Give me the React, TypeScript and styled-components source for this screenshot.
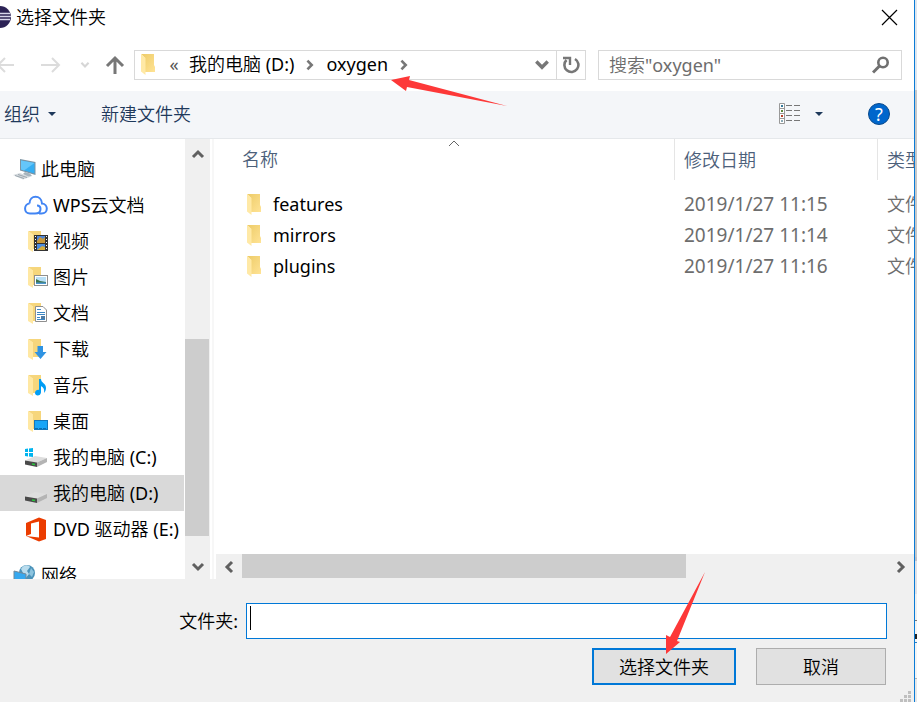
import React from "react";
import styled, { createGlobalStyle, css } from "styled-components";

const FONT = `"Noto Sans", "Noto Sans CJK SC DemiLight", "Noto Sans CJK SC", sans-serif`;

const GlobalStyle = createGlobalStyle`
  *, *::before, *::after { box-sizing: border-box; }
  html, body, #root { height: 100%; }
  body { margin: 0; background: #f0f0f0; overflow: hidden; font-family: ${FONT}; font-size: 18px; font-weight: 400; line-height: 24px; color: #000; }
  button, input { font: inherit; color: inherit; }
`;

const Screen = styled.div`
  position: relative;
  display: flex;
  height: 100vh;
`;

const Dialog = styled.main`
  flex: 1;
  min-width: 0;
  display: flex;
  flex-direction: column;
  background: #fff;
  border-right: 1px solid #0a7bd6;
`;

const Backdrop = styled.div`
  width: 2px;
  background: linear-gradient(
    #dfe6ee 0 90px, #c8c8c8 90px 557px, #bfc0c8 557px 561px, #e2e2e6 561px 594px,
    #f0f0f0 594px 620px, #777 620px 621px, #f4f4f4 621px 634px, #222 634px 639px,
    #f4f4f4 639px 642px, #2a7fc4 642px 643px, #f4f4f4 643px 678px, #b5b5b5 678px 679px, #e8e8e8 679px
  );
`;

const PlainButton = styled.button`
  display: inline-flex;
  align-items: center;
  justify-content: center;
  padding: 0;
  border: 0;
  background: none;
  white-space: nowrap;
  svg { display: block; }
`;

const TitleBar = styled.header`
  display: flex;
  align-items: center;
  height: 34px;
  padding-right: 16px;
`;

const AppMark = styled.span`
  display: flex;
  width: 11px;
  margin-right: 5px;
`;

const Title = styled.h1`
  flex: 1;
  margin: 0;
  font-size: 18px;
  font-weight: inherit;
`;

const Navigation = styled.nav`
  display: flex;
  align-items: center;
  height: 30px;
  margin: 16px 12px 11px 0;
`;

const NavButtons = styled.div`
  display: flex;
  align-items: center;
  width: 134px;
  flex: none;
`;

const NavForward = styled(PlainButton)`
  margin: 0 19px 0 26px;
`;

const NavUp = styled(PlainButton)`
  margin-left: 15px;
`;

const AddressBar = styled.div`
  display: flex;
  align-items: stretch;
  flex: 1;
  min-width: 0;
  height: 30px;
  border: 1px solid #d9d9d9;
`;

const Crumbs = styled.div`
  display: flex;
  align-items: center;
  flex: 1;
  min-width: 0;
  padding: 0 0 2px 5px;
`;

const Overflow = styled(PlainButton)`
  width: 18px;
  margin: 0 6px 0 10px;
  color: #555;
`;

const CrumbArrow = styled(PlainButton)`
  width: 32px;
  padding-top: 2px;
`;

const AddressTool = styled(PlainButton)<{ $divided?: boolean }>`
  width: 29px;
  ${(p) => p.$divided && css`border-left: 1px solid #d9d9d9;`}
`;

const SearchBox = styled.label`
  display: flex;
  align-items: center;
  flex: 0 1 304px;
  min-width: 0;
  height: 30px;
  margin-left: 12px;
  padding: 0 12px 0 10px;
  border: 1px solid #d9d9d9;
`;

const SearchInput = styled.input`
  flex: 1;
  min-width: 0;
  padding: 0;
  border: 0;
  outline: 0;
  background: none;
  &::placeholder { color: #6d6d6d; opacity: 1; }
`;

const Toolbar = styled.div`
  display: flex;
  align-items: center;
  height: 48px;
  padding: 0 24px 2px 4px;
  background: #f4f6f9;
  border-bottom: 1px solid #e5e8eb;
  color: #1e395b;
`;

const OrganizeButton = styled(PlainButton)`
  gap: 8px;
  margin-right: 45px;
`;

const ToolGroup = styled.div`
  display: flex;
  align-items: center;
  margin-left: auto;
`;

const ViewButton = styled(PlainButton)`
  gap: 14px;
  margin-right: 45px;
`;

const HelpButton = styled(PlainButton)`
  width: 22px;
  height: 22px;
  border: 1px solid #0a4a8c;
  border-radius: 50%;
  background: #0066cc;
  color: #fff;
  font-size: 18px;
  line-height: 20px;
`;

const Body = styled.div`
  display: flex;
  flex: 1;
  min-height: 0;
`;

const Sidebar = styled.aside`
  flex: none;
  display: flex;
  width: 216px;
`;

const Tree = styled.ul`
  flex: 1;
  min-width: 0;
  margin: 0;
  padding: 12px 0 0;
  list-style: none;
  overflow: hidden;
`;

const TreeItem = styled.li<{ $level: 0 | 1; $selected?: boolean; $gap?: boolean }>`
  display: flex;
  align-items: center;
  gap: 4px;
  height: 36px;
  margin-top: ${(p) => (p.$gap ? 10 : 0)}px;
  padding-left: ${(p) => (p.$level ? 24 : 12)}px;
  background: ${(p) => (p.$selected ? "#d9d9d9" : "transparent")};
  white-space: nowrap;
  svg { flex: none; }
`;

const VerticalScroll = styled.div`
  display: flex;
  flex-direction: column;
  width: 25px;
  margin-left: 1px;
  background: #f0f0f0;
`;

const VerticalTrack = styled.div`
  flex: 1;
  display: grid;
  grid-template-rows: 170fr 197fr 18fr;
`;

const Thumb = styled.div`
  grid-area: 2 / 1;
  margin-right: 1px;
  background: #cdcdcd;
`;

const ScrollButton = styled(PlainButton)<{ $size?: number }>`
  flex: none;
  width: 25px;
  height: ${(p) => p.$size ?? 25}px;
`;

const Splitter = styled.div`
  width: 2px;
  margin: 0 2px;
  background: #f7f7f7;
`;

const Content = styled.section`
  flex: 1;
  min-width: 0;
  display: flex;
  flex-direction: column;
`;

const TableArea = styled.div`
  flex: 1;
  min-height: 0;
  overflow: hidden;
`;

const FileTable = styled.table`
  width: 100%;
  table-layout: fixed;
  border-collapse: separate;
  border-spacing: 0;
  white-space: nowrap;
  th, td { overflow: hidden; padding: 0; text-align: left; font-weight: inherit; }
`;

const NameCol = styled.col``;
const DateCol = styled.col`
  width: 203px;
`;
const TypeCol = styled.col`
  width: 36px;
`;

const HeadCell = styled.th<{ $first?: boolean }>`
  && {
    height: 41px;
    padding-left: ${(p) => (p.$first ? 26 : 9)}px;
    color: #4c607a;
    border-right: 1px solid #e5e5e5;
  }
  &&:last-child { border-right: 0; }
`;

const HeadLabel = styled.div`
  position: relative;
  height: 41px;
  line-height: 41px;
  svg { position: absolute; top: 0; left: calc(50% - 10px); }
`;

const SpacerRow = styled.tr`
  height: 8px;
`;

const FileRow = styled.tr`
  height: 31px;
`;

const NameCell = styled.td`
  && { padding-left: 30px; }
`;

const FileName = styled.div`
  display: flex;
  align-items: center;
  gap: 12px;
`;

const DetailCell = styled.td`
  && { padding-left: 9px; color: #6d6d6d; }
`;

const DateText = styled.time`
  font-size: 19px;
`;

const HorizontalScroll = styled.div`
  display: flex;
  height: 25px;
  padding: 0 1px 0 0;
  background: #f0f0f0;
`;

const HorizontalTrack = styled.div`
  flex: 1;
  display: grid;
  grid-template-columns: 444fr 202fr;
  padding-left: 1px;
`;

const HorizontalThumb = styled.div`
  height: 24px;
  background: #cdcdcd;
`;

const Footer = styled.form`
  padding: 24px 27px 17px 0;
  background: #f0f0f0;
`;

const FolderField = styled.div`
  display: flex;
  align-items: center;
  height: 36px;
`;

const FolderLabel = styled.label`
  width: 246px;
  padding-right: 8px;
  text-align: right;
`;

const FolderEntry = styled.div`
  display: flex;
  align-items: flex-start;
  flex: 1;
  height: 36px;
  padding: 2px 3px;
  background: #fff;
  border: 1px solid #0078d7;
`;

const Caret = styled.span`
  width: 1px;
  height: 24px;
  background: #000;
`;

const FolderInput = styled.input`
  flex: 1;
  min-width: 0;
  height: 30px;
  padding: 0 2px;
  border: 0;
  outline: 0;
  background: none;
`;

const Actions = styled.div`
  display: flex;
  justify-content: flex-end;
  gap: 20px;
  margin: 9px 1px 0 0;
`;

const ActionButton = styled.button<{ $primary?: boolean }>`
  width: ${(p) => (p.$primary ? 144 : 130)}px;
  height: 37px;
  padding: 0;
  background: #e1e1e1;
  border: ${(p) => (p.$primary ? "2px solid #0078d7" : "1px solid #adadad")};
`;

const Annotations = styled.svg`
  position: absolute;
  left: 0;
  top: 0;
  pointer-events: none;
`;

const Grip = styled.svg`
  position: absolute;
  right: 5px;
  bottom: 0;
`;

function FolderIcon() {
  return (
    <svg width="15" height="22" viewBox="0 0 15 22" aria-hidden="true">
      <defs>
        <linearGradient id="folderBack" x1="0" x2="1" y1="0" y2="1">
          <stop offset="0" stopColor="#edcb67" />
          <stop offset="1" stopColor="#ffe395" />
        </linearGradient>
      </defs>
      <path d="M1 1H14V12L15 14V19H5V5Z" fill="url(#folderBack)" />
      <path d="M1 1L5.500 5V22L1 18.500Z" fill="#ffe9a6" />
    </svg>
  );
}

type Kind = "pc" | "cloud" | "video" | "picture" | "document" | "download" | "music" | "desktop" | "windrive" | "drive" | "office" | "network";

const FOLDER_KINDS: Kind[] = ["video", "picture", "document", "download", "music", "desktop"];

function Drive() {
  return (
    <>
      <path d="M1 15.500L11 11L23 13L13 17.500Z" fill="#dedede" />
      <path d="M1 15.500L13 17.500V22L1 19.500Z" fill="#4a4a4a" />
      <path d="M13 17.500L23 13V17L13 22Z" fill="#b4b4b4" />
      <path d="M8 19L11 19.500" stroke="#27c83b" strokeWidth="1.500" />
    </>
  );
}

function TreeIcon({ kind }: { kind: Kind }) {
  return (
    <svg width="25" height="25" viewBox="0 0 25 25" aria-hidden="true">
      {FOLDER_KINDS.includes(kind) && (
        <>
          <path d="M4 2H17V20H9V6Z" fill="#f6d67c" />
          <path d="M4 2L9 5.500V23L4 20Z" fill="#ffe8a3" />
        </>
      )}
      {kind === "pc" && (
        <>
          <path d="M8 2L23.500 5V18L8 13.500Z" fill="#7b93a3" />
          <path d="M9 3.500L22.500 6V16.500L9 12.500Z" fill="#36aef2" />
          <path d="M9 3.500L22.500 6L12 13.400L9 12.500Z" fill="#65c6fa" />
          <path d="M13 15L18 16.500L20 19L16 20L11 17Z" fill="#a6b4bd" />
          <path d="M1 18L8 16L18 20L11 22.500Z" fill="#d5dade" />
          <path d="M3 18.500L12 21.500M6 17.500L15 20.500" stroke="#9ba6ae" />
        </>
      )}
      {kind === "cloud" && (
        <path
          d="M5.500 10.500C-0.500 11 -0.500 20.500 6 20.500H11C14.500 20.500 16.500 18.500 16.500 16C16.500 14 15 12.500 13 12.500M5.500 10.500C5.500 1.500 17.500 1.500 18 10.500C24.500 11 24.500 20.500 17.500 20.500H15"
          fill="none"
          stroke="#4285f4"
          strokeWidth="2"
        />
      )}
      {kind === "video" && (
        <>
          <rect x="10" y="6" width="14" height="16" fill="#333" />
          <rect x="13" y="7" width="8" height="7" fill="#4f86d8" />
          <rect x="13" y="15" width="8" height="6" fill="#4d8de0" />
          <path d="M13 12L16 8L19 10L21 8V14H13Z" fill="#c9993b" />
          <path d="M13 21L18 17L21 18V21Z" fill="#d5ae3f" />
          <path d="M11.500 7V22M22.500 7V22" stroke="#fff" strokeDasharray="1 2" />
        </>
      )}
      {kind === "picture" && (
        <>
          <rect x="10.500" y="10.500" width="13" height="10" fill="#fff" stroke="#8f8f8f" />
          <rect x="12" y="12" width="10" height="7" fill="#b9e0f7" />
          <path d="M12 14L16 16L22 17V19H12Z" fill="#3d7450" />
          <path d="M12 17.500H22V19H12Z" fill="#4c97d0" />
        </>
      )}
      {kind === "document" && (
        <>
          <path d="M11.500 5.500H19L22.500 9V20.500H11.500Z" fill="#fff" stroke="#8f8f8f" />
          <path d="M13 8.500H17M13 11.500H21M13 13.500H21M13 16.500H16M13 18.500H21" stroke="#3c87c4" />
          <rect x="17" y="15" width="4" height="3" fill="#507ca4" />
        </>
      )}
      {kind === "download" && <path d="M13.500 9H19V15H22.500L16.500 22L10.500 15H13.500Z" fill="#2f93e2" />}
      {kind === "music" && (
        <path d="M15 6H17C17 10 22 10 22 15C22 17 21 19 20 20C21 15 18 14 17 13V19C17 23.500 11 23.500 11 20C11 17 14 16.500 15 17Z" fill="#009df5" />
      )}
      {kind === "desktop" && (
        <>
          <rect x="10.500" y="11.500" width="13" height="9" fill="#18a6f7" stroke="#1277bb" />
          <path d="M11 19.500H23" stroke="#0a6fb2" strokeDasharray="3 1" />
        </>
      )}
      {(kind === "windrive" || kind === "drive") && <Drive />}
      {kind === "windrive" && (
        <path d="M1 4L4 3.600V7H1ZM5 3.400L9 3V7H5ZM1 8H4V11.500L1 11ZM5 8H9V12L5 11.600Z" fill="#00b4ef" />
      )}
      {kind === "office" && <path d="M2 6L15 0.500L22 3V22L15 24.500L2 19L15 20.500V4.500L7 6.500V17L2 19Z" fill="#eb3c00" />}
      {kind === "network" && (
        <>
          <circle cx="15" cy="10" r="8" fill="#4a92b9" />
          <path d="M9 6C12 1 17 2 18 4L15 8L17 11L13 16L11 10Z" fill="#b9dced" />
          <path d="M19 5L22 9L20 14L17 11Z" fill="#8dc4df" />
          <path d="M2 8L14 11V22L2 18Z" fill="#36a8ef" stroke="#71899a" />
        </>
      )}
    </svg>
  );
}

const TREE: { label: string; kind: Kind; level: 0 | 1; selected?: boolean; gap?: boolean }[] = [
  { label: "此电脑", kind: "pc", level: 0 },
  { label: "WPS云文档", kind: "cloud", level: 1 },
  { label: "视频", kind: "video", level: 1 },
  { label: "图片", kind: "picture", level: 1 },
  { label: "文档", kind: "document", level: 1 },
  { label: "下载", kind: "download", level: 1 },
  { label: "音乐", kind: "music", level: 1 },
  { label: "桌面", kind: "desktop", level: 1 },
  { label: "我的电脑 (C:)", kind: "windrive", level: 1 },
  { label: "我的电脑 (D:)", kind: "drive", level: 1, selected: true },
  { label: "DVD 驱动器 (E:)", kind: "office", level: 1 },
  { label: "网络", kind: "network", level: 0, gap: true },
];

const FILES = [
  { name: "features", date: "2019/1/27 11:15" },
  { name: "mirrors", date: "2019/1/27 11:14" },
  { name: "plugins", date: "2019/1/27 11:16" },
];

const CHEVRONS = {
  up: "M2 10L7 5L12 10",
  down: "M2 4L7 9L12 4",
  left: "M10 2L5 7L10 12",
  right: "M4 2L9 7L4 12",
};

interface ChevronProps {
  to: keyof typeof CHEVRONS;
  color?: string;
  weight?: number;
  size?: number;
}

function Chevron({ to, color = "#606060", weight = 3, size = 14 }: ChevronProps) {
  return (
    <svg width={size} height={size} viewBox="0 0 14 14" aria-hidden="true">
      <path d={CHEVRONS[to]} fill="none" stroke={color} strokeWidth={weight} />
    </svg>
  );
}

function DropTriangle() {
  return (
    <svg width="8" height="4" viewBox="0 0 8 4" aria-hidden="true">
      <path d="M0 0H8L4 4Z" fill="#1e395b" />
    </svg>
  );
}

function NavControls() {
  return (
    <NavButtons>
      <PlainButton type="button" aria-label="后退">
        <svg width="15" height="20" viewBox="0 0 15 20"><path d="M14 10H-4M5 3L-2 10L5 17" fill="none" stroke="#dcdcdc" strokeWidth="2" /></svg>
      </PlainButton>
      <NavForward type="button" aria-label="前进">
        <svg width="20" height="20" viewBox="0 0 20 20"><path d="M0 10H18M11 3L18 10L11 17" fill="none" stroke="#dcdcdc" strokeWidth="2" /></svg>
      </NavForward>
      <PlainButton type="button" aria-label="最近的位置">
        <Chevron to="down" color="#d6d6d6" size={10} />
      </PlainButton>
      <NavUp type="button" aria-label="上移">
        <svg width="20" height="20" viewBox="0 0 20 20"><path d="M10 19V3M2 11L10 3L18 11" fill="none" stroke="#777" strokeWidth="3" /></svg>
      </NavUp>
    </NavButtons>
  );
}

export default function App() {
  return (
    <>
      <GlobalStyle />
      <Screen>
        <Dialog>
          <TitleBar>
            <AppMark>
              <svg width="11" height="22" viewBox="0 0 11 22" aria-hidden="true">
                <circle cx="0" cy="11" r="11" fill="#2c2255" />
                <path d="M0 7.500H10M0 10.500H11M0 13.500H10" stroke="#d8d5ec" strokeWidth="1.500" />
              </svg>
            </AppMark>
            <Title>选择文件夹</Title>
            <PlainButton type="button" aria-label="关闭">
              <svg width="17" height="17" viewBox="0 0 17 17"><path d="M1 1L16 16M16 1L1 16" stroke="#000" strokeWidth="1.200" /></svg>
            </PlainButton>
          </TitleBar>

          <Navigation aria-label="位置">
            <NavControls />
            <AddressBar>
              <Crumbs>
                <FolderIcon />
                <Overflow type="button">«</Overflow>
                <PlainButton type="button">我的电脑 (D:)</PlainButton>
                <CrumbArrow type="button" aria-label="展开"><Chevron to="right" color="#777" size={12} /></CrumbArrow>
                <PlainButton type="button">oxygen</PlainButton>
                <CrumbArrow type="button" aria-label="展开"><Chevron to="right" color="#777" size={12} /></CrumbArrow>
              </Crumbs>
              <AddressTool type="button" aria-label="历史记录"><Chevron to="down" color="#777" size={16} /></AddressTool>
              <AddressTool type="button" aria-label="刷新" $divided>
                <svg width="18" height="18" viewBox="0 0 18 18">
                  <path d="M13 3A7 7 0 1 1 4.500 4" fill="none" stroke="#777" strokeWidth="2.600" />
                  <path d="M1 2H8V9" fill="none" stroke="#777" strokeWidth="2.400" />
                </svg>
              </AddressTool>
            </AddressBar>
            <SearchBox>
              <SearchInput type="search" aria-label="搜索" placeholder={'搜索"oxygen"'} />
              <svg width="17" height="18" viewBox="0 0 17 18" aria-hidden="true">
                <circle cx="11" cy="6.500" r="4.700" fill="none" stroke="#707070" strokeWidth="2.600" />
                <path d="M7.500 10L1 16.500" stroke="#707070" strokeWidth="3" />
              </svg>
            </SearchBox>
          </Navigation>

          <Toolbar>
            <OrganizeButton type="button">组织<DropTriangle /></OrganizeButton>
            <PlainButton type="button">新建文件夹</PlainButton>
            <ToolGroup>
              <ViewButton type="button" aria-label="更改视图">
                <svg width="22" height="21" viewBox="0 0 22 21">
                  <path d="M0.500 0.500H5.500V20.500H0.500ZM0.500 5.500H5.500M0.500 10.500H5.500M0.500 15.500H5.500" fill="#fff" stroke="#999" />
                  <path d="M7 2.500H13M15 2.500H21M7 7.500H13M15 7.500H21M7 12.500H13M15 12.500H21M7 17.500H13M15 17.500H21" stroke="#777" />
                  <path d="M2 3H4" stroke="#35799b" strokeWidth="2" />
                  <path d="M2 8H4" stroke="#5c8a3d" strokeWidth="2" />
                  <path d="M2 13H4" stroke="#b8402a" strokeWidth="2" />
                  <path d="M2 18H4" stroke="#8ca9b5" strokeWidth="2" />
                </svg>
                <DropTriangle />
              </ViewButton>
              <HelpButton type="button" aria-label="帮助">?</HelpButton>
            </ToolGroup>
          </Toolbar>

          <Body>
            <Sidebar>
              <Tree>
                {TREE.map((item) => (
                  <TreeItem key={item.label} $level={item.level} $selected={item.selected} $gap={item.gap}>
                    <TreeIcon kind={item.kind} />
                    {item.label}
                  </TreeItem>
                ))}
              </Tree>
              <VerticalScroll>
                <ScrollButton $size={30} type="button" aria-label="向上滚动"><Chevron to="up" /></ScrollButton>
                <VerticalTrack><Thumb /></VerticalTrack>
                <ScrollButton type="button" aria-label="向下滚动"><Chevron to="down" /></ScrollButton>
              </VerticalScroll>
              <Splitter />
            </Sidebar>
            <Content>
              <TableArea>
                <FileTable>
                  <colgroup><NameCol /><DateCol /><TypeCol /></colgroup>
                  <thead>
                    <tr>
                      <HeadCell $first>
                        <HeadLabel>
                          名称
                          <svg width="12" height="8" viewBox="0 0 12 8" aria-hidden="true"><path d="M1 7L6 2L11 7" fill="none" stroke="#666" /></svg>
                        </HeadLabel>
                      </HeadCell>
                      <HeadCell>修改日期</HeadCell>
                      <HeadCell>类型</HeadCell>
                    </tr>
                  </thead>
                  <tbody>
                    <SpacerRow aria-hidden="true" />
                    {FILES.map((file) => (
                      <FileRow key={file.name}>
                        <NameCell><FileName><FolderIcon />{file.name}</FileName></NameCell>
                        <DetailCell><DateText>{file.date}</DateText></DetailCell>
                        <DetailCell>文件夹</DetailCell>
                      </FileRow>
                    ))}
                  </tbody>
                </FileTable>
              </TableArea>
              <HorizontalScroll>
                <ScrollButton type="button" aria-label="向左滚动"><Chevron to="left" /></ScrollButton>
                <HorizontalTrack><HorizontalThumb /></HorizontalTrack>
                <ScrollButton type="button" aria-label="向右滚动"><Chevron to="right" /></ScrollButton>
              </HorizontalScroll>
            </Content>
          </Body>

          <Footer onSubmit={(e: React.FormEvent) => e.preventDefault()}>
            <FolderField>
              <FolderLabel htmlFor="folder">文件夹:</FolderLabel>
              <FolderEntry><Caret /><FolderInput id="folder" type="text" /></FolderEntry>
            </FolderField>
            <Actions>
              <ActionButton $primary type="submit">选择文件夹</ActionButton>
              <ActionButton type="button">取消</ActionButton>
            </Actions>
          </Footer>
        </Dialog>
        <Backdrop />
        <Grip width="12" height="12" viewBox="0 0 12 12" aria-hidden="true">
          <path d="M8 1h3v3h-3zM4 5h3v3h-3zM8 5h3v3h-3zM0 9h3v3h-3zM4 9h3v3h-3zM8 9h3v3h-3z" fill="#bfbfbf" />
        </Grip>
        <Annotations width="917" height="702" viewBox="0 0 917 702" aria-hidden="true">
          <path d="M391 80L410 76L409 80L507 106L407 87L406 91Z" fill="#fd3838" />
          <path d="M705 572L677 641L680 642L666 654V635L670 637Z" fill="#fd3838" />
        </Annotations>
      </Screen>
    </>
  );
}
